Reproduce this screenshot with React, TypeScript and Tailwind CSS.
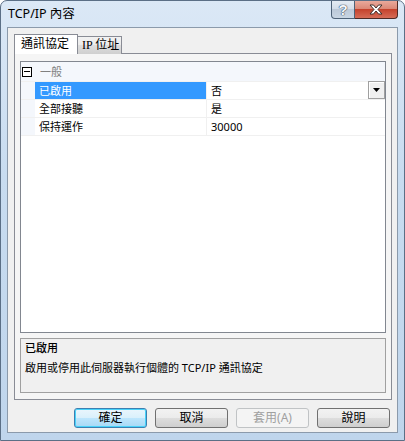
import { FunctionComponent } from "react";

const font = "font-['Noto_Sans','Noto_Sans_CJK_TC',sans-serif]";

type RowProps = {
  name: string;
  value: string;
  selected?: boolean;
  dropdown?: boolean;
};

const PropRow: FunctionComponent<RowProps> = ({ name, value, selected, dropdown }) => (
  <div className="flex h-[18px] border-b border-[#f0f0f0] text-[11px]">
    <div className="w-[14px] shrink-0 bg-[#f4f7fc]" />
    <div
      className={`w-[172px] shrink-0 pl-[4px] leading-[17px] border-r border-[#f0f0f0] ${
        selected ? "bg-[#3399ff] text-white" : "text-black"
      }`}
    >
      {name}
    </div>
    <div className="flex-1 flex">
      <div className="flex-1 pl-[4px] leading-[17px] text-black">{value}</div>
      {dropdown && (
        <div className="w-[17px] h-[18px] -mt-px border border-[#a0a0a0] bg-[#f0f0f0] shadow-[inset_1px_1px_0_#fff] flex items-center justify-center">
          <svg width="7" height="4" viewBox="0 0 7 4">
            <path d="M0 0h7L3.5 4z" fill="#000" />
          </svg>
        </div>
      )}
    </div>
  </div>
);

type ButtonProps = {
  label: string;
  primary?: boolean;
  disabled?: boolean;
};

const DialogButton: FunctionComponent<ButtonProps> = ({ label, primary, disabled }) => (
  <div
    className={`w-[73px] h-[20px] rounded-[3px] border flex items-center justify-center text-[12px] leading-none ${
      disabled
        ? "border-[#c0c3c5] bg-[#f4f4f4] text-[#a0a0a0]"
        : primary
        ? "border-[#3c7fb1] bg-[linear-gradient(#eaf6fd,#d9f0fc_50%,#bee6fd_50%,#a7d9f5)] text-black shadow-[inset_0_0_0_1px_#48d2f9]"
        : "border-[#707070] bg-[linear-gradient(#f2f2f2,#ebebeb_50%,#dddddd_50%,#cfcfcf)] text-black"
    }`}
  >
    {label}
  </div>
);

const App: FunctionComponent = () => {
  return (
    <div
      className={`w-[405px] h-[441px] flex flex-col rounded-t-[7px] border border-[#5b6f86] bg-[linear-gradient(180deg,#dbe8f6,#c8dcf0_40%,#bfd5ec)] ${font} text-[12px]`}
    >
      {/* title bar */}
      <div className="h-[26px] flex items-start">
        <div className="pl-[7px] pt-[5px] leading-[16px] text-[12.5px] text-black">TCP/IP 內容</div>
        <div className="ml-auto mr-[6px] flex">
          <div className="w-[24px] h-[18px] border border-t-0 border-[#4e6277] rounded-bl-[4px] bg-[linear-gradient(#e4ebf3,#d2dce8_50%,#bcc9d8_50%,#c9d6e3)] flex items-center justify-center">
            <span className="text-[15px] font-bold leading-none text-[#f4f7fb] font-['Liberation_Sans',sans-serif] [text-shadow:0_0_1px_#3d4d60,0_0_1px_#3d4d60,0_0_1px_#3d4d60]">?</span>
          </div>
          <div className="w-[43px] h-[18px] border border-l-0 border-t-0 border-[#4e2a25] rounded-br-[4px] bg-[linear-gradient(#e9a99b,#d98573_50%,#c5432d_50%,#d66c57)] flex items-center justify-center">
            <svg width="14" height="11" viewBox="0 0 14 11">
              <path
                d="M1 1h3.5L7 4l2.5-3H13L9 5.5 13 10H9.5L7 7l-2.5 3H1l4-4.5z"
                fill="#fff"
                stroke="#40302c"
                strokeWidth="1"
                strokeLinejoin="round"
              />
            </svg>
          </div>
        </div>
      </div>

      {/* client area */}
      <div className="mx-[6px] mb-[7px] flex-1 border border-[#8b9aab] bg-[#f0f0f0] pl-[6px] pr-[6px] pt-[6px] flex flex-col">
        {/* tabs */}
        <div className="flex items-end h-[20px] -mb-px relative z-10">
          <div className="h-[20px] w-[64px] border border-b-0 border-[#898c95] bg-white pl-[6px] leading-[18px] text-[12px] text-black">
            通訊協定
          </div>
          <div className="h-[18px] w-[45px] -ml-px border border-b-0 border-[#898c95] bg-[linear-gradient(#f2f2f2,#ebebeb_50%,#dddddd_50%,#cfcfcf)] pl-[4px] leading-[16px] text-[12px] text-black font-['Liberation_Serif','Noto_Sans_CJK_TC',serif]">
            IP 位址
          </div>
        </div>

        {/* tab page */}
        <div className="w-[378px] h-[347px] border border-[#898c95] bg-[#f5f5f5] px-[5px] pt-[7px] pb-[5px] flex flex-col gap-[5px]">
          {/* property grid */}
          <div className="h-[272px] border border-[#828790] bg-white flex flex-col">
            <div className="flex h-[20px] bg-[#f4f7fc] border-b border-[#f0f0f0] items-center">
              <div className="w-[14px] shrink-0 flex pl-[1px]">
                <div className="w-[10px] h-[10px] border border-black bg-white flex items-center justify-center">
                  <div className="w-[6px] h-px bg-black" />
                </div>
              </div>
              <div className="pl-[5px] text-[11px] text-[#808080] leading-[18px]">一般</div>
            </div>
            <PropRow name="已啟用" value="否" selected dropdown />
            <PropRow name="全部接聽" value="是" />
            <PropRow name="保持運作" value="30000" />
            <div className="flex-1" />
          </div>

          {/* description */}
          <div className="h-[55px] border border-[#a0a0a0] bg-[#f0f0f0] pl-[4px] pt-[2px] text-[11px] text-black">
            <div className="leading-[14px] font-medium">已啟用</div>
            <div className="leading-[14px] mt-[6px]">啟用或停用此伺服器執行個體的 TCP/IP 通訊協定</div>
          </div>
        </div>

        {/* buttons */}
        <div className="flex justify-end gap-[8px] pt-[8px] pr-px">
          <DialogButton label="確定" primary />
          <DialogButton label="取消" />
          <DialogButton label="套用(A)" disabled />
          <DialogButton label="說明" />
        </div>
      </div>
    </div>
  );
};

export default App;
